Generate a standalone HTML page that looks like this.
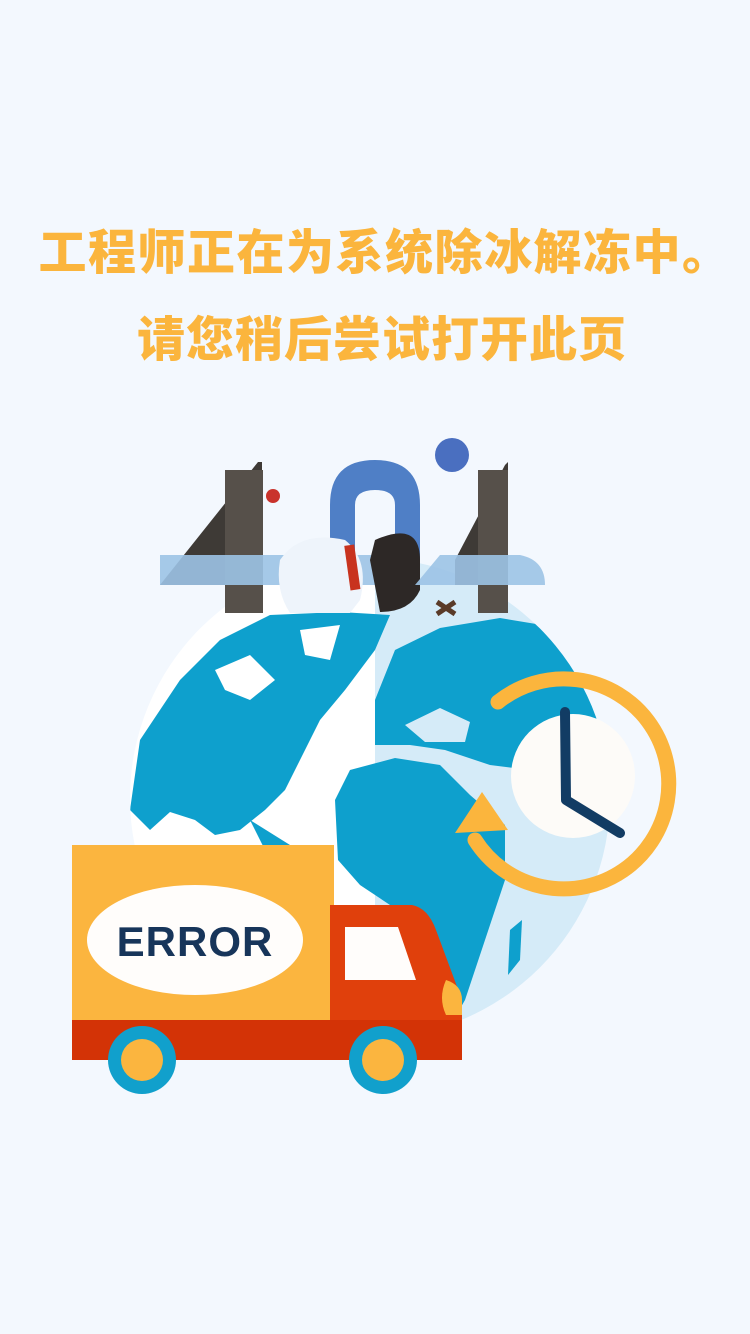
<!DOCTYPE html>
<html><head><meta charset="utf-8"><style>
html,body{margin:0;padding:0;}
body{width:750px;height:1334px;background:#f3f8fe;position:relative;overflow:hidden;font-family:"Liberation Sans","Noto Sans CJK SC",sans-serif;}
.t{position:absolute;left:0;width:750px;text-align:center;color:#fbb53d;font-weight:900;font-size:48px;line-height:60px;white-space:nowrap;font-family:"Noto Sans CJK SC",sans-serif;}
</style></head><body>
<div class="t" style="top:218px;left:10px;letter-spacing:1.5px;">工程师正在为系统除冰解冻中。</div>
<div class="t" style="top:305px;left:7px;letter-spacing:1px;">请您稍后尝试打开此页</div>
<svg width="750" height="1334" style="position:absolute;left:0;top:0">
<defs>
<clipPath id="g"><circle cx="370" cy="798" r="240"/></clipPath>
</defs>
<g clip-path="url(#g)">
<rect x="100" y="550" width="275" height="500" fill="#ffffff"/>
<rect x="375" y="550" width="300" height="500" fill="#d5ebf8"/>
<path d="M130 810 L140 740 L180 680 L220 640 L270 615 L340 612 L390 615 L375 650 L345 690 L320 720 L300 760 L285 790 L265 810 L240 830 L215 835 L195 820 L170 812 L150 830 Z" fill="#0ea0cd"/>
<path d="M215 670 L250 655 L275 680 L250 700 L225 690 Z" fill="#fff"/>
<path d="M300 630 L340 625 L330 660 L305 655 Z" fill="#fff"/>
<path d="M250 820 L290 845 L320 880 L300 890 L270 860 Z" fill="#0ea0cd"/>
<path d="M375 700 L395 650 L440 628 L500 618 L560 628 L600 660 L620 720 L615 790 L570 790 L530 770 L490 765 L445 750 L410 745 L375 745 Z" fill="#0ea0cd"/>
<path d="M405 725 L440 708 L470 722 L465 742 L425 742 Z" fill="#d5ebf8"/>
<path d="M335 800 L350 770 L395 758 L440 765 L470 795 L505 825 L505 880 L485 940 L465 1000 L445 1035 L420 1025 L405 960 L390 905 L360 885 L338 860 Z" fill="#0ea0cd"/>
<path d="M510 930 L522 920 L520 960 L508 975 Z" fill="#0ea0cd"/>
</g>
<circle cx="573" cy="776" r="62" fill="#fdfbf8"/>
<path d="M498 702 A105 105 0 1 1 475 840" fill="none" stroke="#fbb53d" stroke-width="15" stroke-linecap="round"/>
<path d="M455 833 L482 792 L508 830 Z" fill="#fbb53d"/>
<polyline points="565,712 566,800 620,833" fill="none" stroke="#123c64" stroke-width="10" stroke-linecap="round" stroke-linejoin="round"/>
<path d="M160 585 L258 462 L262 462 L262 585 Z" fill="#3e3a36"/>
<rect x="225" y="470" width="38" height="143" fill="#56504a"/>
<rect x="160" y="555" width="215" height="30" fill="#9cc3e6" opacity="0.9"/>
<circle cx="273" cy="496" r="7" fill="#c9332c"/>
<path d="M330 590 L330 505 Q330 460 375 460 Q420 460 420 505 L420 590 L395 590 L395 505 Q395 490 375 490 Q355 490 355 505 L355 590 Z" fill="#4f7fc6"/>
<path d="M375 540 Q420 520 420 560 L420 590 Q410 612 380 612 L370 560 Z" fill="#2d2826"/>
<path d="M280 560 Q300 530 345 540 Q370 560 360 600 L350 613 L290 613 Q275 590 280 560 Z" fill="#eef4fb"/>
<rect x="347" y="545" width="10" height="45" fill="#c8331e" transform="rotate(-8 352 565)"/>
<path d="M455 560 L505 465 L508 462 L508 585 L455 585 Z" fill="#3e3a36"/>
<rect x="478" y="470" width="30" height="143" fill="#56504a"/>
<path d="M415 585 L440 555 L520 555 Q545 560 545 585 Z" fill="#9cc3e6" opacity="0.9"/>
<circle cx="452" cy="455" r="17" fill="#4a6fc0"/>
<path d="M437 602 L455 614 M437 614 L455 602" stroke="#5a3a28" stroke-width="5"/>
<rect x="72" y="845" width="262" height="180" fill="#fbb53f"/>
<ellipse cx="195" cy="940" rx="108" ry="55" fill="#fffdfb"/>
<text x="195" y="956" text-anchor="middle" font-family="Liberation Sans" font-weight="bold" font-size="42" fill="#17355a" letter-spacing="1">ERROR</text>
<path d="M330 905 L412 905 Q428 908 436 930 L462 1000 L462 1025 L330 1025 Z" fill="#e0400c"/>
<path d="M345 927 L398 927 L416 980 L345 980 Z" fill="#fffdfb"/>
<path d="M446 980 Q462 985 462 1000 L462 1015 L446 1015 Q438 998 446 980 Z" fill="#fbb53f"/>
<rect x="72" y="1020" width="390" height="40" fill="#d33306"/>
<circle cx="142" cy="1060" r="34" fill="#11a0cc"/><circle cx="142" cy="1060" r="21" fill="#fbb53f"/>
<circle cx="383" cy="1060" r="34" fill="#11a0cc"/><circle cx="383" cy="1060" r="21" fill="#fbb53f"/>
</svg>
</body></html>
